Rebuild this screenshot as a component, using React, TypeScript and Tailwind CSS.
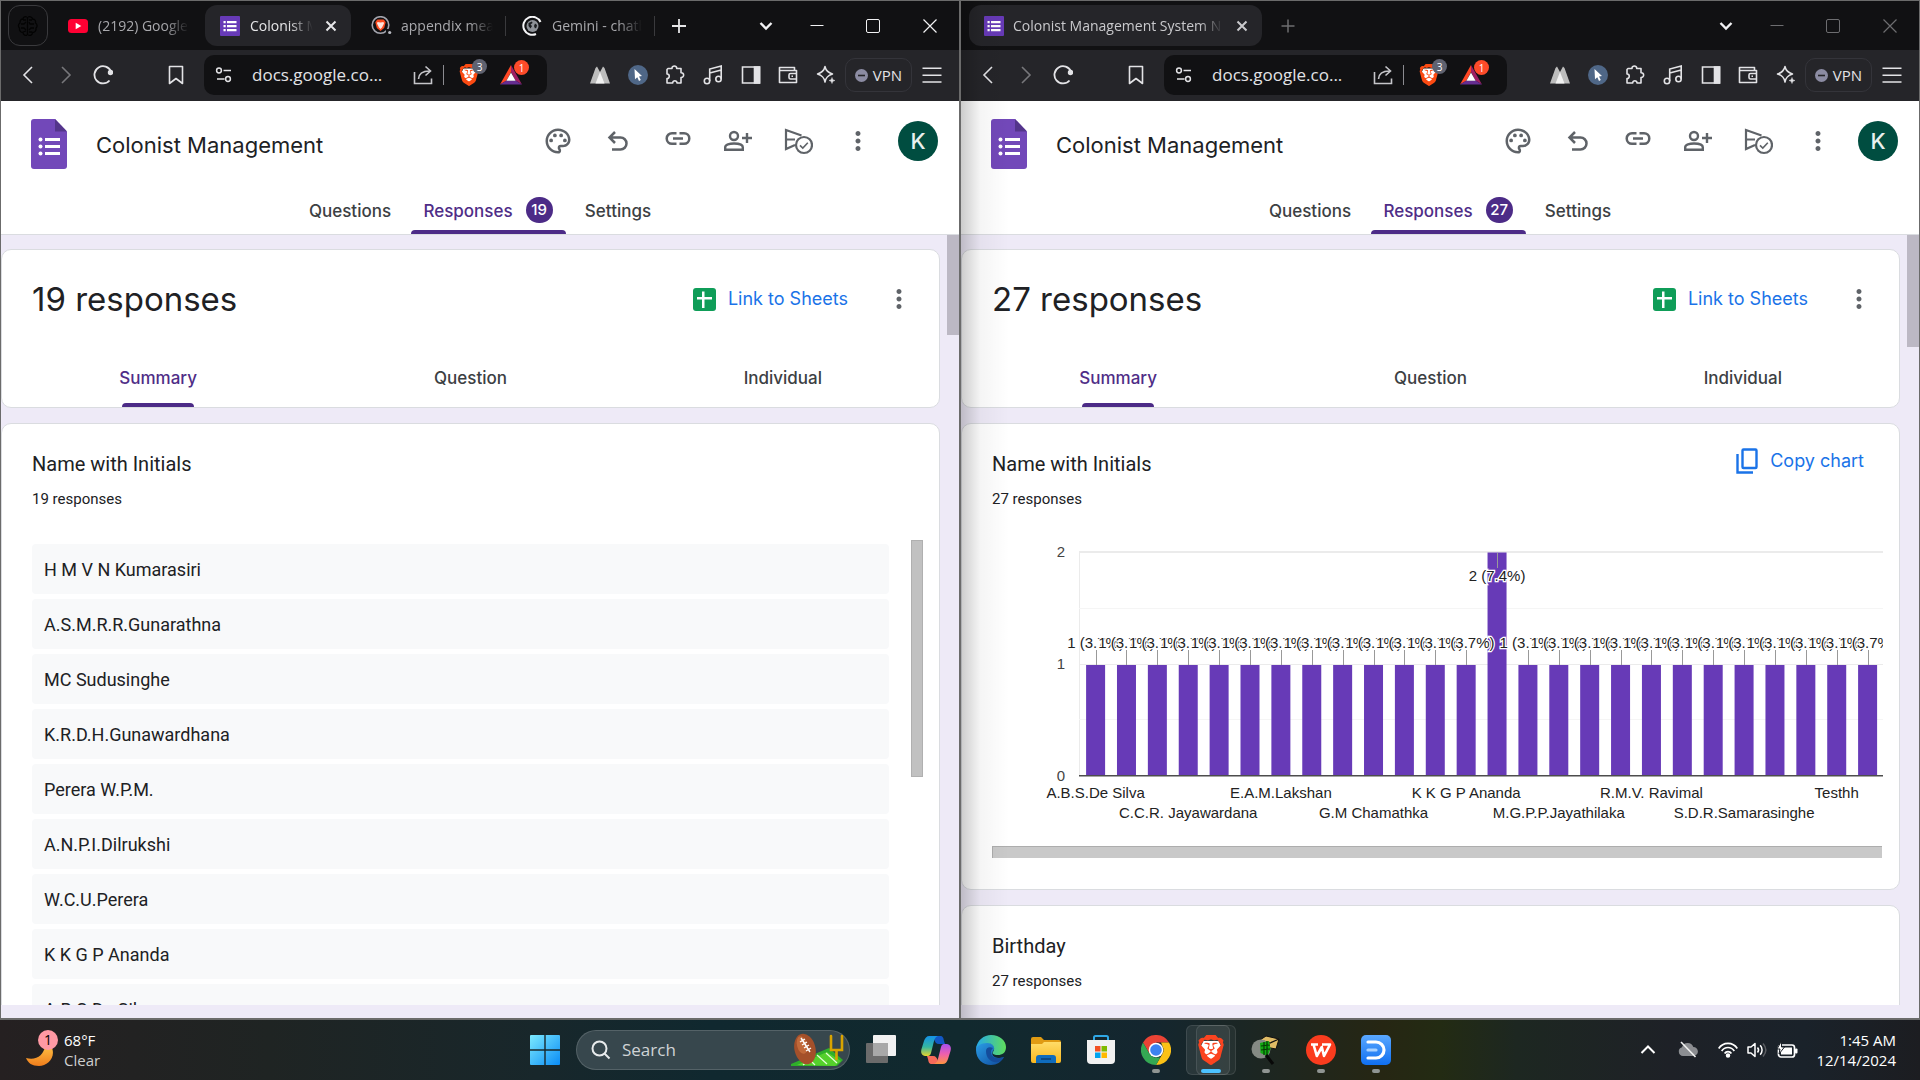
import React from "react";
import { SiBrave } from "react-icons/si";
import { MdOutlinePalette, MdMoreVert } from "react-icons/md";

const ui = "font-['Open_Sans','Noto_Sans',sans-serif]";

/* ---------- shared data ---------- */

const names = [
  "H M V N Kumarasiri",
  "A.S.M.R.R.Gunarathna",
  "MC Sudusinghe",
  "K.R.D.H.Gunawardhana",
  "Perera W.P.M.",
  "A.N.P.I.Dilrukshi",
  "W.C.U.Perera",
  "K K G P Ananda",
  "A.B.S.De Silva",
];

const axisLabels = [
  "A.B.S.De Silva",
  "C.C.R. Jayawardana",
  "E.A.M.Lakshan",
  "G.M Chamathka",
  "K K G P Ananda",
  "M.G.P.P.Jayathilaka",
  "R.M.V. Ravimal",
  "S.D.R.Samarasinghe",
  "Testhh",
];

const counts = Array.from({ length: 26 }, (_, i) => (i === 13 ? 2 : 1));

/* ---------- small icons ---------- */

function Stroke({ size = 20, w = 2, children }: { size?: number; w?: number; children: React.ReactNode }) {
  return (
    <svg width={size} height={size} viewBox="0 0 20 20" fill="none" stroke="currentColor" strokeWidth={w} aria-hidden="true">
      {children}
    </svg>
  );
}

function FormsFavicon() {
  return (
    <svg width="20" height="20" viewBox="0 0 20 20" className="shrink-0" aria-hidden="true">
      <rect width="20" height="20" rx="1" fill="#673ab7" />
      <path fill="#fff" d="M3.500 5h2.200v2.200H3.500zM7 5h9.500v2.200H7zM3.500 9h2.200v2.200H3.500zM7 9h9.500v2.200H7zM3.500 13h2.200v2.200H3.500zM7 13h9.500v2.200H7z" />
    </svg>
  );
}

function FormsLogo() {
  return (
    <svg width="36" height="50" viewBox="0 0 36 50" aria-hidden="true">
      <path fill="#7248b9" d="M3 0h21l12 12.500V47a3 3 0 0 1-3 3H3a3 3 0 0 1-3-3V3a3 3 0 0 1 3-3z" />
      <path fill="#54358b" d="M24 0l12 12.500H24z" />
      <g fill="#fff">
        <circle cx="9.500" cy="20.500" r="2" />
        <circle cx="9.500" cy="27.500" r="2" />
        <circle cx="9.500" cy="34.500" r="2" />
        <path d="M14 19h15v3H14zM14 26h15v3H14zM14 33h15v3H14z" />
      </g>
    </svg>
  );
}

function BraveMark({ size, color = "#fb542b" }: { size: number; color?: string }) {
  return (
    <span className="relative inline-flex" aria-hidden="true">
      <svg className="absolute inset-0" width={size} height={size} viewBox="0 0 20 20">
        <path fill="#fff" d="M5 4h10l1.500 3-2 6-4.500 4-4.500-4-2-6z" />
      </svg>
      <SiBrave size={size} color={color} className="relative" />
    </span>
  );
}

function AppendixFavicon() {
  return (
    <svg width="21" height="20" viewBox="0 0 21 20" className="shrink-0" aria-hidden="true">
      <circle cx="9.500" cy="9" r="8.300" fill="none" stroke="#a4a5ae" strokeWidth="1.600" />
      <path fill="#fb4a1e" d="M5 5l1.500-1.500h6L14 5l.6 1.500-1.400 5.500-3.700 3-3.700-3L4.400 6.500z" />
      <path fill="#fff" d="M6.500 6l3 .6 3-.6.5 1.400-2 4-1.500 1.600L8 11.400l-2-4z" opacity=".85" />
      <path d="M15 15.500h4" stroke="#111113" strokeWidth="5" />
      <circle cx="18.700" cy="16.500" r="1.600" fill="#b9bac2" />
    </svg>
  );
}

function GlobeFavicon() {
  return (
    <svg width="20" height="20" viewBox="0 0 20 20" className="shrink-0" aria-hidden="true">
      <path d="M18.500 6A9 9 0 1 0 14 18" fill="none" stroke="#f5f5f7" strokeWidth="2" />
      <circle cx="10.500" cy="10" r="6" fill="#8e9298" />
      <path fill="#1b1d20" d="M6.500 7l3.500-1.500.5 1.500-2 1.500 1.500 1.500-1.500 2.500-2-2.500zM13 7.500l2 1.500-.5 2.500-1.500 1-1-2.500z" />
    </svg>
  );
}

function YouTube() {
  return (
    <svg width="20" height="14" viewBox="0 0 20 14" className="shrink-0" aria-hidden="true">
      <rect width="20" height="14" rx="3.500" fill="#ff0033" />
      <path fill="#fff" d="M7.700 3.800v6.400L13.300 7z" />
    </svg>
  );
}

function BrainIcon() {
  return (
    <svg width="22" height="22" viewBox="0 0 22 22" fill="none" stroke="#030303" strokeWidth="1.300" aria-hidden="true">
      <path d="M10.500 2v18M10 2C7 1 6 3 6 4 3 4 3 7 3 8 1 9 1 12 2.500 13 2 16 4 17.500 6 17.500 6 20 9 21 10 20M4 9h3l2-2M4 13h3l2 2M6 5h3M6 17l3-1" />
      <path d="M11 2c3-1 4.500 1 4.500 2C18 4 19 6 18.500 8c2 1 2 4 .5 5 .5 3-1.500 4.500-3.500 4.500C15.500 20 13 21 11 20M17 9h-4l-1-2M17 13h-3l-2 2M15 5h-3M15 17h-3" />
    </svg>
  );
}

function RewardsIcon() {
  return (
    <svg width="22" height="20" viewBox="0 0 22 20" aria-hidden="true">
      <path fill="#ff4724" d="M11 0v7L6.500 15.500 0 19.500z" />
      <path fill="#9e1f63" d="M11 0l11 19.500-6.500-4L11 7z" />
      <path fill="#662d91" d="M0 19.500l6.500-4h9l6.500 4z" />
      <path fill="#fff" d="M11 7.500l4.600 8.300H6.400z" />
    </svg>
  );
}

/* ---------- browser chrome ---------- */

function CountBadge({ tone, children }: { tone: string; children: React.ReactNode }) {
  return (
    <span className={`absolute -top-[5px] left-[14px] flex h-[15px] w-[15px] items-center justify-center rounded-full text-[10px] leading-none text-white ${tone}`}>
      {children}
    </span>
  );
}

function WindowControls({ active }: { active: boolean }) {
  const tone = active ? "text-[#f2f2f4]" : "text-[#6d6d70]";
  return (
    <div className="mr-px ml-auto flex h-full items-center">
      <button aria-label="Search tabs" className="flex h-full w-[47px] items-center justify-center text-[#f2f2f4]">
        <Stroke size={20} w={2.4}><path d="M4.500 7l5.500 5.500L15.500 7" /></Stroke>
      </button>
      <div className={`flex h-full ${tone}`}>
        <button aria-label="Minimize" className="flex w-[56px] items-center justify-center"><Stroke w={1}><path d="M3.500 9.500h13" /></Stroke></button>
        <button aria-label="Maximize" className="flex w-[56px] items-center justify-center"><Stroke w={1}><rect x="3.500" y="3.500" width="13" height="13" rx="1.500" /></Stroke></button>
        <button aria-label="Close window" className="flex w-[57px] items-center justify-center"><Stroke w={1.2}><path d="M3.500 3.500l13 13M16.500 3.500l-13 13" /></Stroke></button>
      </div>
    </div>
  );
}

function TabTitle({ children, className }: { children: React.ReactNode; className: string }) {
  return (
    <span className={`overflow-hidden text-left text-[14px] leading-5 whitespace-nowrap [mask-image:linear-gradient(to_right,#000_calc(100%-24px),transparent)] ${ui} ${className}`}>
      {children}
    </span>
  );
}

function CloseTab() {
  return (
    <button aria-label="Close tab" className="flex h-5 w-5 items-center justify-center">
      <Stroke size={20} w={2}><path d="M5.500 5.500l9 9M14.500 5.500l-9 9" /></Stroke>
    </button>
  );
}

function TabStripLeft() {
  return (
    <div className="flex h-[49px] shrink-0 items-center bg-[#111113]">
      <button aria-label="Pinned tab" className="ml-[7px] flex h-[41px] w-10 shrink-0 items-center justify-center rounded-xl border border-[#3a3a3d]">
        <BrainIcon />
      </button>
      <button className="ml-5 flex items-center text-[#a9a9ad]">
        <YouTube />
        <TabTitle className="ml-2.5 w-[91px]">(2192) Google</TabTitle>
      </button>
      <div className="ml-4 flex h-[41px] w-[146px] shrink-0 items-center rounded-xl bg-[#252529] px-[10px] pl-[15px] text-[#e6e6e8]">
        <FormsFavicon />
        <TabTitle className="mr-auto ml-2.5 w-[63px]">Colonist M</TabTitle>
        <CloseTab />
      </div>
      <button className="ml-5 flex items-center text-[#a9a9ad]">
        <AppendixFavicon />
        <TabTitle className="ml-[9px] w-[92px]">appendix mea</TabTitle>
      </button>
      <span className="ml-3 h-5 w-px bg-[#3a3a3d]" />
      <button className="ml-4 flex items-center text-[#a9a9ad]">
        <GlobeFavicon />
        <TabTitle className="ml-2.5 w-[90px]">Gemini - chatb</TabTitle>
      </button>
      <span className="ml-3 h-5 w-px bg-[#3a3a3d]" />
      <button aria-label="New tab" className="ml-[14px] text-[#e6e6e8]"><Stroke size={20} w={1.8}><path d="M10 3v14M3 10h14" /></Stroke></button>
      <WindowControls active />
    </div>
  );
}

function TabStripRight() {
  return (
    <div className="flex h-[49px] shrink-0 items-center bg-[#111113]">
      <div className="ml-2 flex h-[41px] w-[293px] items-center rounded-xl bg-[#252529] pr-2.5 pl-[15px] text-[#c9c9cc]">
        <FormsFavicon />
        <TabTitle className="mr-auto ml-[9px] w-[210px]">Colonist Management System N</TabTitle>
        <CloseTab />
      </div>
      <button aria-label="New tab" className="ml-4 text-[#6d6d70]"><Stroke size={20} w={1.5}><path d="M10 3.500v13M3.500 10h13" /></Stroke></button>
      <WindowControls active={false} />
    </div>
  );
}

function Toolbar() {
  const id = React.useId();
  return (
    <div className={`flex h-[51px] shrink-0 items-center bg-[#252529] pb-px text-[#e3e3e6] ${ui}`}>
      <button aria-label="Back" className="ml-2 flex w-[38px] justify-center"><Stroke w={1.6}><path d="M14 2l-8 8 8 8" /></Stroke></button>
      <button aria-label="Forward" className="flex w-[38px] justify-center text-[#77777b]"><Stroke w={1.6}><path d="M6 2l8 8-8 8" /></Stroke></button>
      <button aria-label="Reload" className="flex w-[36px] justify-center">
        <Stroke w={1.8}>
          <path d="M18 6.500A8.600 8.600 0 1 0 16.500 15.500" />
          <circle cx="17.500" cy="7.500" r="1.800" fill="currentColor" />
        </Stroke>
      </button>
      <button aria-label="Bookmark this page" className="ml-9 flex w-[38px] justify-center"><Stroke w={1.6}><path d="M3.500 1.500h13v17L10 13.500l-6.500 5z" strokeLinejoin="round" /></Stroke></button>
      <div className="ml-[9px] flex h-10 w-[343px] items-center rounded-[10px] bg-[#111113]">
        <button aria-label="Site information" className="ml-2.5 flex w-5 justify-center">
          <Stroke size={20} w={1.5}><circle cx="5" cy="5.500" r="2.400" /><path d="M9.500 5.500H17M3 14h7.500" /><circle cx="14" cy="14" r="2.400" /></Stroke>
        </button>
        <label htmlFor={id} className="sr-only">Address</label>
        <input id={id} readOnly value="docs.google.co..." className="ml-[18px] w-[150px] bg-transparent text-[17px] leading-6 outline-none" />
        <button aria-label="Share" className="ml-[9px] flex w-6 justify-center text-[#c5c5c9]">
          <Stroke size={20} w={1.6}><path d="M1.500 7v11.500h17v-5M5.500 14c.3-5.500 4.500-8 11-8M12.500 1.500L17.500 6l-5 4.500" /></Stroke>
        </button>
        <span className="ml-2 h-5 w-px bg-[#8b8b90]" />
        <button aria-label="Brave Shields" className="relative ml-3.5 flex">
          <BraveMark size={22} color="#fb4a12" />
          <CountBadge tone="bg-[#5f6270]">3</CountBadge>
        </button>
        <button aria-label="Brave Rewards" className="relative ml-5 flex">
          <RewardsIcon />
          <CountBadge tone="bg-[#fd4b2a]">1</CountBadge>
        </button>
      </div>
      <div className="ml-auto grid w-[264px] grid-cols-7 justify-items-center">
        <button aria-label="Mountain extension">
          <svg width="20" height="18" viewBox="0 0 20 18" aria-hidden="true"><path fill="#bdbdbd" d="M5.500 2l1.500-1.500L10 6l3-5.500L14.500 2 20 17.500H0z" /><path fill="#f1f1f1" d="M10 6l4.500 11.500h-9z" /></svg>
        </button>
        <button aria-label="Cursor extension">
          <svg width="20" height="20" viewBox="0 0 20 20" aria-hidden="true"><circle cx="10" cy="10" r="10" fill="#4f6787" /><path fill="#fff" d="M6.500 4l7.500 7-3 .4 1.800 3.600-1.800.9-1.700-3.700-2.300 2z" /></svg>
        </button>
        <button aria-label="Extensions">
          <Stroke size={20} w={1.6}><path strokeLinejoin="round" d="M3 3.500h4c-.3-3.300 5-3.300 4.700 0H16v4.300c3.500-.3 3.500 4.900 0 4.700V18h-4c.2-3-4.500-3-4.300 0H2v-4.500c3 .2 3-4.700 0-4.500V4.500z" /></Stroke>
        </button>
        <button aria-label="Media control">
          <Stroke size={20} w={1.6}><circle cx="4" cy="16" r="2.700" /><circle cx="15.500" cy="14" r="2.700" /><path d="M6.700 16V4l11.500-3v13M6.700 8l11.500-3" /></Stroke>
        </button>
        <button aria-label="Side panel">
          <Stroke size={20} w={1.6}><path d="M1.500 2h17v16h-17z" /><path fill="currentColor" d="M13.500 2h5v16h-5z" /></Stroke>
        </button>
        <button aria-label="Wallet">
          <Stroke size={20} w={1.6}><path strokeLinejoin="round" d="M1.500 2.500h15v3h2v12h-17zM1.500 5.500h15M18.500 8.500h-6a1.500 1.500 0 0 0-1.500 1.500v2.500a1.500 1.500 0 0 0 1.500 1.500h6M13.500 11.300h1.500" /></Stroke>
        </button>
        <button aria-label="Leo AI">
          <Stroke size={20} w={1.5}><path strokeLinejoin="round" d="M9 1.500c.8 4 2.500 6 7.500 7.500C11.500 10.500 9.800 12.500 9 17c-.8-4.500-2.500-6.500-7.500-8C6.500 7.500 8.200 5.500 9 1.500z" /><path fill="currentColor" strokeWidth=".5" d="M16 12.500c.4 2 1 2.600 3 3-2 .4-2.600 1-3 3-.4-2-1-2.600-3-3 2-.4 2.600-1 3-3z" /></Stroke>
        </button>
      </div>
      <button className="flex h-[34px] w-[67px] items-center justify-center gap-[5px] rounded-[10px] border border-[#34343a] text-[15px] leading-5">
        <svg width="13" height="13" viewBox="0 0 13 13" aria-hidden="true"><circle cx="6.500" cy="6.500" r="6.500" fill="#8c8ca3" /><path d="M3 6.500h7" stroke="#252529" strokeWidth="1.600" /></svg>
        VPN
      </button>
      <button aria-label="Menu" className="mr-[17px] ml-[10px]"><Stroke size={20} w={1.5}><path d="M.5 3.300h19M.5 10.300h19M.5 17h19" /></Stroke></button>
    </div>
  );
}

/* ---------- forms page ---------- */

const gs = "font-['Inter',sans-serif]";

function FormHeader({ count }: { count: number }) {
  const cell = "flex h-10 w-[60px] items-center justify-center";
  return (
    <header className={`shrink-0 border-b border-[#dadce0] bg-white ${gs}`}>
      <div className="flex h-[84px] items-center pr-[21px] pl-[30px]">
        <a href="#forms" aria-label="Forms home" className="mt-0.5"><FormsLogo /></a>
        <h1 className="mt-1 ml-[29px] text-[22px] leading-8 text-[#202124]">Colonist Management</h1>
        <div className="-mt-1 ml-auto flex items-center text-[#5f6368]">
          <button aria-label="Customize theme" className={cell}><MdOutlinePalette size={30} /></button>
          <button aria-label="Undo" className={cell}>
            <svg width="24" height="24" viewBox="0 0 24 24" fill="none" stroke="currentColor" strokeWidth="2.500" aria-hidden="true"><path d="M9 3L3.500 8.500 9 14M4 8.500h10.500a6 6 0 0 1 0 12H6" /></svg>
          </button>
          <button aria-label="Copy responder link" className={cell}>
            <svg width="26" height="26" viewBox="0 0 26 26" fill="none" stroke="currentColor" strokeWidth="2.500" aria-hidden="true"><path d="M11.500 5.200H7a5.300 5.300 0 0 0 0 10.600h4.500M14.500 5.200H19a5.300 5.300 0 0 1 0 10.600h-4.500M8 10.500h10" /></svg>
          </button>
          <button aria-label="Share with collaborators" className={cell}>
            <svg width="28" height="24" viewBox="0 0 28 24" fill="none" stroke="currentColor" strokeWidth="2.400" aria-hidden="true"><circle cx="10" cy="7" r="4" /><path d="M1.200 20.800v-2.500c0-5 17.600-5 17.600 0v2.500zM23 4v10M18 9h10" /></svg>
          </button>
          <button aria-label="Publish" className={cell}>
            <svg width="29" height="28" viewBox="0 0 29 28" fill="none" stroke="currentColor" strokeWidth="2.200" aria-hidden="true"><path d="M17.500 8.500L2 3v19l9-4M2 12.500h9" /><circle cx="20" cy="18" r="8" /><path strokeWidth="1.600" d="M16 18.300l2.800 2.700 5-5.200" /></svg>
          </button>
          <button aria-label="More options" className={cell}><MdMoreVert size={30} /></button>
          <button aria-label="Account" className="ml-[10px] flex h-10 w-10 items-center justify-center rounded-full bg-[#004d40] text-[22px] leading-none font-medium text-[#e8f0ee]">K</button>
        </div>
      </div>
      <nav className="flex h-[49px] justify-center gap-1 text-[17px] leading-6 font-medium text-[#3c4043]">
        <button className="flex w-[113px] items-center justify-center pt-0.5">Questions</button>
        <button className="relative flex w-[155px] items-center justify-center gap-[13px] pt-0.5 text-[#4f2d87]">
          Responses
          <span className="-mt-0.5 flex h-[26px] w-[27px] items-center justify-center rounded-full bg-[#4c2b87] text-[15px] leading-none text-white">{count}</span>
          <span className="absolute inset-x-0 bottom-0 h-1 rounded-t bg-[#4c2b87]" />
        </button>
        <button className="flex w-[97px] items-center justify-center pt-0.5">Settings</button>
      </nav>
    </header>
  );
}

const card = "mr-[7px] shrink-0 rounded-[10px] border border-[#dadce0] bg-white";

function SummaryCard({ count }: { count: number }) {
  const tab = "relative flex w-full items-center justify-center";
  return (
    <section className={`${card} mt-[14px] ${gs}`}>
      <div className="flex h-[98px] items-center pr-[25px] pl-[30px]">
        <h2 className="text-[33px] leading-10 text-[#202124]">{count} responses</h2>
        <button className="ml-auto flex items-center gap-3 text-[18px] leading-6 text-[#1a73e8]">
          <svg width="23" height="23" viewBox="0 0 23 23" aria-hidden="true"><rect width="23" height="23" rx="3" fill="#0f9d58" /><path fill="#fff" d="M9 3.500h2.500v5.500h7.500v2.500h-7.500v8.500H9v-8.500H4V9h5z" /></svg>
          Link to Sheets
        </button>
        <button aria-label="Response options" className="ml-9 text-[#5f6368]"><MdMoreVert size={30} /></button>
      </div>
      <nav className="grid h-[59px] grid-cols-3 text-[17px] leading-6 font-medium text-[#3c4043]">
        <button className={`${tab} text-[#4f2d87]`}>
          Summary
          <span className="absolute bottom-0 h-1 w-[72px] rounded-t bg-[#4c2b87]" />
        </button>
        <button className={tab}>Question</button>
        <button className={tab}>Individual</button>
      </nav>
    </section>
  );
}

function QuestionHeading({ title, count, action }: { title: string; count: number; action?: React.ReactNode }) {
  return (
    <div className="flex justify-between pt-[28px] pr-[35px] pl-[30px] font-['Roboto',sans-serif] text-[#202124]">
      <div>
        <h3 className="text-[20px] leading-6">{title}</h3>
        <p className="mt-[13px] text-[15px] leading-5">{count} responses</p>
      </div>
      {action}
    </div>
  );
}

function NamesList() {
  return (
    <section className={`${card} mt-[15px]`}>
      <QuestionHeading title="Name with Initials" count={19} />
      <div className="mt-[31px] flex items-start pr-4 pl-[30px]">
        <ul className="mt-1 mr-[22px] flex flex-1 flex-col gap-[5px]">
          {names.map((n) => (
            <li key={n} className="h-[50px] rounded bg-[#f8f9fa] px-3 font-['Roboto',sans-serif] text-[18px] leading-[51px] text-[#202124]">{n}</li>
          ))}
        </ul>
        <div className="h-[237px] w-3 border border-[#b0b0b0] bg-[#c1c1c1]" />
      </div>
    </section>
  );
}

function NamesChart() {
  const cx = (i: number) => 103.6 + i * 30.88;
  return (
    <svg width="891" height="300" viewBox="0 0 891 300" role="img" aria-label="Count of responses per name" className="block font-['Liberation_Sans',Arial,sans-serif] text-[15px]">
      <g fill="#ebebeb">
        <rect x="87" y="21" width="804" height="2" />
        <rect x="87" y="134" width="804" height="1" />
        <rect x="87" y="22" width="1" height="224" />
      </g>
      <g fill="#f5f5f5">
        <rect x="87" y="78" width="804" height="1" />
        <rect x="87" y="189" width="804" height="1" />
      </g>
      {counts.map((c, i) => (
        <rect key={i} x={cx(i) - 9.5} y={c === 2 ? 22.5 : 135} width="19" height={c === 2 ? 223 : 110.5} fill="#673ab7" />
      ))}
      <rect x="87" y="245" width="804" height="1.500" fill="#4d4d4d" />
      {counts.map((c, i) => (
        <rect key={i} x={Math.round(cx(i))} y={c === 2 ? 23 : 120} width="1" height="15" fill="#999" />
      ))}
      {counts.map((c, i) => (
        <text key={i} x={cx(i)} y={c === 2 ? 51 : 118} textAnchor="middle" fill="#222" stroke="#fff" strokeWidth="2.500" paintOrder="stroke">
          {c === 2 ? "2 (7.4%)" : "1 (3.7%)"}
        </text>
      ))}
      <g fill="#444" textAnchor="end">
        <text x="73" y="27">2</text>
        <text x="73" y="139">1</text>
        <text x="73" y="251">0</text>
      </g>
      <g fill="#222" textAnchor="middle">
        {axisLabels.map((l, i) => (
          <text key={l} x={cx(i * 3)} y={i % 2 ? 288 : 268}>{l}</text>
        ))}
      </g>
    </svg>
  );
}

function ChartCards() {
  return (
    <>
      <section className={`${card} mt-[15px] pb-[31px]`}>
        <QuestionHeading
          title="Name with Initials"
          count={27}
          action={
            <button className={`-mt-[3px] flex h-6 items-center gap-3 text-[18px] leading-6 text-[#1a73e8] ${gs}`}>
              <svg width="22" height="26" viewBox="0 0 22 26" fill="none" stroke="currentColor" strokeWidth="2.400" aria-hidden="true"><rect x="6.500" y="1.500" width="14" height="18.500" rx="1" /><path d="M1.500 6v18.500H17" /></svg>
              Copy chart
            </button>
          }
        />
        <div className="mt-[21px] ml-[30px] overflow-hidden">
          <div className="mr-[15px] overflow-hidden"><NamesChart /></div>
          <div className="mt-4 mr-[17px] h-3 border-t border-l border-[#adadad] bg-[#c9c9c9]" />
        </div>
      </section>
      <section className={`${card} mt-[15px] pb-40`}>
        <QuestionHeading title="Birthday" count={27} />
      </section>
    </>
  );
}

function BrowserWindow({ tabs, count, thumb, children, shaded }: { tabs: React.ReactNode; count: number; thumb: string; children: React.ReactNode; shaded?: boolean }) {
  return (
    <section className="relative flex min-h-0 min-w-0 flex-col border-x border-t border-b-2 border-[#6b6b6b] bg-[#eeeaf7]">
      {tabs}
      <Toolbar />
      <FormHeader count={count} />
      <div className="mb-[13px] flex min-h-0 flex-1">
        <div className="flex min-w-0 flex-1 flex-col overflow-hidden">
          <SummaryCard count={count} />
          {children}
        </div>
        <div className="w-3"><div className={`bg-[#bcb8c4] ${thumb}`} /></div>
      </div>
      {shaded && <div className="pointer-events-none absolute inset-y-0 left-0 w-12 bg-linear-to-r from-black/20 via-black/4 via-40% to-transparent" />}
    </section>
  );
}

/* ---------- taskbar ---------- */

function Football() {
  return (
    <svg width="56" height="36" viewBox="0 0 56 36" aria-hidden="true">
      <path d="M2 32L40 16l14 12-6 6H2z" fill="#2fae2a" />
      <path d="M8 33l30-13 14 9-6 5z" fill="#55d02c" />
      <path d="M14 33l6-5M26 33l-7-7M38 32l-10-9M48 31l-11-10" stroke="#e6ffd9" strokeWidth="1.200" />
      <ellipse cx="16" cy="17" rx="10.500" ry="15.500" fill="#a4502a" transform="rotate(-14 16 17)" />
      <ellipse cx="13" cy="13" rx="5" ry="9" fill="#c1693a" transform="rotate(-14 13 13)" />
      <path d="M12 6l9 14M11 10l5-3M13 13l5-3M15 16l5-3M17 19l5-3" stroke="#fff" strokeWidth="1.400" />
      <path d="M42 4v14h11V4M47.500 18v9" fill="none" stroke="#d9a400" strokeWidth="2.600" strokeLinecap="round" />
    </svg>
  );
}

function AppButton({ label, mark, children }: { label: string; mark?: "open" | "active"; children: React.ReactNode }) {
  return (
    <button aria-label={label} className="relative flex h-[60px] w-[55px] items-center justify-center">
      {mark === "active" && (
        <>
          <span className="absolute top-[5px] right-0.5 h-[50px] w-10 rounded-md border border-white/10 bg-white/5" />
          <span className="absolute top-[5px] left-[3px] h-[50px] w-11 rounded-md border border-white/10 bg-white/8" />
        </>
      )}
      <span className="relative flex">{children}</span>
      {mark === "open" && <span className="absolute bottom-[7px] h-1 w-2 rounded-full bg-[#8f9492]" />}
      {mark === "active" && <span className="absolute bottom-[7px] h-1 w-5 rounded-full bg-[#4cc2ff]" />}
    </button>
  );
}

function Taskbar() {
  const defs = (
    <defs>
      <linearGradient id="win" x1="0" y1="0" x2="1" y2="1"><stop offset="0" stopColor="#7ceaff" /><stop offset="1" stopColor="#0a8cf5" /></linearGradient>
      <linearGradient id="cp1" x1="0" y1="0" x2="0" y2="1"><stop offset="0" stopColor="#1492e8" /><stop offset=".55" stopColor="#35b6a0" /><stop offset="1" stopColor="#e8d62c" /></linearGradient>
      <linearGradient id="cp2" x1="0" y1="0" x2="0" y2="1"><stop offset="0" stopColor="#a64ff0" /><stop offset=".5" stopColor="#ee5fae" /><stop offset="1" stopColor="#ff9440" /></linearGradient>
      <linearGradient id="ed1" x1="0" y1="0" x2="1" y2="0"><stop offset="0" stopColor="#24a7ea" /><stop offset="1" stopColor="#5fdd5c" /></linearGradient>
      <linearGradient id="ed2" x1="0" y1="0" x2="1" y2="1"><stop offset="0" stopColor="#2b9fe8" /><stop offset="1" stopColor="#0f4a9c" /></linearGradient>
      <linearGradient id="dk" x1="0" y1="0" x2="0" y2="1"><stop offset="0" stopColor="#5aa8ff" /><stop offset="1" stopColor="#0f6ff0" /></linearGradient>
      <linearGradient id="fold" x1="0" y1="0" x2="0" y2="1"><stop offset="0" stopColor="#ffdc68" /><stop offset="1" stopColor="#f8b71e" /></linearGradient>
      <linearGradient id="moon" x1="0" y1="0" x2="0" y2="1"><stop offset="0" stopColor="#ffc043" /><stop offset="1" stopColor="#ef7d1c" /></linearGradient>
    </defs>
  );
  return (
    <footer className={`grid h-[60px] shrink-0 grid-cols-[1fr_auto_1fr] items-center bg-[linear-gradient(to_right,#252021_0%,#1f2423_14%,#18272b_28%,#10282f_37%,#11292e_50%,#14262f_60%,#262613_72%,#232b13_75%,#1d2721_79%,#1e2127_87%,#1a222a_94%,#1c1d21_100%)] text-white ${ui}`}>
      <svg width="0" height="0" className="absolute" aria-hidden="true">{defs}</svg>
      <button className="ml-[26px] flex w-fit items-center pb-px text-left">
        <span className="relative block h-9 w-8">
          <svg width="29" height="36" viewBox="0 0 29 36" aria-hidden="true"><path fill="url(#moon)" d="M25 14c6 10-3 20-12 20C6 34 2 31 0 26c10 3 18-3 19-12z" /></svg>
          <span className="absolute -top-0.5 left-3 flex h-5 w-5 items-center justify-center rounded-full bg-[#ff99a4] text-[14px] leading-none text-black">1</span>
        </span>
        <span className="ml-1.5 text-[15px] leading-5">68°F<br /><span className="text-[#cfcfcf]">Clear</span></span>
      </button>
      <div className="flex items-center">
        <AppButton label="Start">
          <svg width="30" height="30" viewBox="0 0 30 30" aria-hidden="true"><path fill="url(#win)" d="M1 0h13.300v14.300H0V1a1 1 0 0 1 1-1zM15.700 0H29a1 1 0 0 1 1 1v13.300H15.700zM0 15.700h14.300V30H1a1 1 0 0 1-1-1zM15.700 15.700H30V29a1 1 0 0 1-1 1H15.700z" /></svg>
        </AppButton>
        <div className="mr-[3px] ml-1 flex h-10 w-[274px] items-center rounded-full border border-white/15 bg-[#37474d] pr-1 pl-3.5">
          <svg width="20" height="20" viewBox="0 0 20 20" fill="none" stroke="#e8ebec" strokeWidth="2" aria-hidden="true"><circle cx="8.500" cy="8.500" r="7" /><path d="M13.500 13.500l5 5" /></svg>
          <label htmlFor="task-search" className="sr-only">Search</label>
          <input id="task-search" placeholder="Search" className="ml-[11px] min-w-0 flex-1 bg-transparent text-[17px] leading-6 outline-none placeholder:text-[#cfd3d5]" />
          <Football />
        </div>
        <AppButton label="Task view">
          <svg width="30" height="30" viewBox="0 0 30 30" aria-hidden="true"><rect y="8" width="22" height="20" rx="1" fill="#6b6b6b" /><rect x="7" width="23" height="21" rx="1" fill="#f1f1f1" /><rect x="7" y="8" width="15" height="13" fill="#a8a8a8" /></svg>
        </AppButton>
        <AppButton label="Copilot">
          <svg width="30" height="28" viewBox="0 0 30 28" aria-hidden="true">
            <path fill="#1257c4" d="M9 0h10c3 0 3.500 2 4 5l1 3h-6c-3 0-4-2-5-5z" />
            <path fill="url(#cp1)" d="M8.500 0H17c-3 1-3.500 3-5 9l-2 8c-.6 2.500-2 3-4.500 3-5 0-6-3-5-7L3 5c1-3 2.500-5 5.500-5z" />
            <path fill="#f76a5a" d="M21 28H11c-3 0-3.500-2-4-5l-1-3h6c3 0 4 2 5 5z" />
            <path fill="url(#cp2)" d="M21.500 28H13c3-1 3.500-3 5-9l2-8c.6-2.500 2-3 4.500-3 5 0 6 3 5 7l-2.500 8c-1 3-2.500 5-5.500 5z" />
          </svg>
        </AppButton>
        <AppButton label="Edge">
          <svg width="30" height="30" viewBox="0 0 30 30" aria-hidden="true">
            <path fill="url(#ed2)" d="M0 15C0 7 7 5 14 8c5 2 5 6 3 8-2 3 0 7 6 7 2 0 4-1 5-1-3 5-7 8-13 8C7 30 0 24 0 15z" />
            <path fill="#144c9b" d="M10 16c0 8 6 12 12 11 3-.5 5-3 6-5-4 2-13 2-13-5 0-2 1-3 2-4-4-2-7 0-7 3z" />
            <path fill="url(#ed1)" d="M0 14C1 5 8 0 15 0c9 0 15 6 15 12s-4 8-8 8c-5 0-6-2-5-3 3-4 0-9-6-9C5 8 1 11 0 14z" />
          </svg>
        </AppButton>
        <AppButton label="File Explorer">
          <svg width="30" height="26" viewBox="0 0 30 26" aria-hidden="true"><path fill="#e09b13" d="M0 2a2 2 0 0 1 2-2h8l3 3h15a2 2 0 0 1 2 2v5H0z" /><path fill="url(#fold)" d="M0 7l11 0 2-2h17v19a2 2 0 0 1-2 2H2a2 2 0 0 1-2-2z" /><path fill="#0f6cbd" d="M5 26v-5a3 3 0 0 1 3-3h14a3 3 0 0 1 3 3v5z" /><path d="M10 22h10" stroke="#0b4a86" strokeWidth="2" /></svg>
        </AppButton>
        <AppButton label="Microsoft Store">
          <svg width="30" height="30" viewBox="0 0 30 30" aria-hidden="true"><path d="M8 6V2.500A1.500 1.500 0 0 1 9.500 1h11A1.500 1.500 0 0 1 22 2.500V6" fill="none" stroke="#2fa8e6" strokeWidth="2" /><path fill="#f1f1f1" d="M1 5h28v20a4 4 0 0 1-4 4H5a4 4 0 0 1-4-4z" /><path fill="#f25022" d="M9 11h5.500v5.500H9z" /><path fill="#7fba00" d="M15.500 11H21v5.500h-5.500z" /><path fill="#00a4ef" d="M9 17.500h5.500V23H9z" /><path fill="#ffb900" d="M15.500 17.500H21V23h-5.500z" /></svg>
        </AppButton>
        <AppButton label="Chrome" mark="open">
          <svg width="30" height="30" viewBox="0 0 30 30" aria-hidden="true"><path fill="#ea4335" d="M2 7.500a15 15 0 0 1 26 0H15L8.500 18.800z" /><path fill="#fbc116" d="M28 7.500A15 15 0 0 1 15 30l6.500-11.300a7.500 7.500 0 0 0 0-7.500L20 7.500z" /><path fill="#34a853" d="M15 30A15 15 0 0 1 2 7.500l6.500 11.300A7.500 7.500 0 0 0 15 22.500h4.300z" /><circle cx="15" cy="15" r="7.300" fill="#fff" /><circle cx="15" cy="15" r="5.800" fill="#3c82f0" /></svg>
        </AppButton>
        <AppButton label="Brave" mark="active"><BraveMark size={30} color="#fb4420" /></AppButton>
        <AppButton label="Mail inspector" mark="open">
          <svg width="30" height="30" viewBox="0 0 30 30" aria-hidden="true"><path fill="#e0bc66" stroke="#111" d="M9 5l6-4 13 3-3 10-16-3z" /><path d="M9 5l10 3 9-4" fill="none" stroke="#111" strokeWidth="1.200" /><circle cx="10" cy="14" r="9.500" fill="#858a84" /><path fill="#1a1" d="M9 8l9-2 1.500 8-3 7-7-3z" /><path d="M10 11l9-1M10 15l9-1M13 7v13M16 6v14" stroke="#063a06" strokeWidth="1.200" /><path d="M15 20l7 9" stroke="#080808" strokeWidth="3" /></svg>
        </AppButton>
        <AppButton label="WPS Office" mark="open">
          <svg width="30" height="30" viewBox="0 0 30 30" aria-hidden="true"><circle cx="15" cy="15" r="15" fill="#fa3c1e" /><path d="M5 9.500h7M7.500 9.500l3.300 11.500 5-9 2.200 9L24 9.500h-8" fill="none" stroke="#fff" strokeWidth="2.600" strokeLinejoin="round" /></svg>
        </AppButton>
        <AppButton label="Drawing app" mark="open">
          <svg width="30" height="30" viewBox="0 0 30 30" aria-hidden="true"><rect width="30" height="30" rx="5" fill="url(#dk)" /><path d="M7 7h8a8 8 0 0 1 0 16H7" fill="none" stroke="#fff" strokeWidth="3.200" strokeLinecap="round" /><path d="M7 15h8" stroke="#a9d2ff" strokeWidth="3.200" strokeLinecap="round" /></svg>
        </AppButton>
      </div>
      <div className="flex items-center justify-end pr-6">
        <button aria-label="Show hidden icons" className="flex w-10 justify-center"><Stroke size={20} w={2}><path d="M3.500 13l6.500-6.500 6.500 6.500" /></Stroke></button>
        <button aria-label="OneDrive" className="flex w-10 justify-center">
          <svg width="20" height="18" viewBox="0 0 20 18" aria-hidden="true"><path fill="#8b8d91" d="M5 15a4.500 4.500 0 0 1-1-8.800A6 6 0 0 1 15.300 6 4.500 4.500 0 0 1 15.500 15z" /><path d="M3 1l14.500 15" stroke="#f2f2f2" strokeWidth="1.600" /></svg>
        </button>
        <button aria-label="Network, volume and battery" className="ml-[10px] flex items-center gap-[9px]">
          <svg width="20" height="16" viewBox="0 0 20 16" fill="none" stroke="#fff" strokeWidth="1.700" aria-hidden="true"><path d="M.7 6.500C5-.4 15-.4 19.300 6.500M3.700 9c3-4.700 9.600-4.700 12.600 0M6.600 11.500c1.700-2.600 5.100-2.600 6.800 0" /><circle cx="10" cy="13.500" r="1.400" fill="#fff" /></svg>
          <svg width="21" height="16" viewBox="0 0 21 16" fill="none" stroke="#fff" strokeWidth="1.500" aria-hidden="true"><path strokeLinejoin="round" d="M1 5h3l4-3.500v13L4 11H1z" /><path d="M10.500 5.500c1.300 1.500 1.300 3.500 0 5M13.200 3.300c2.500 2.700 2.500 6.700 0 9.400" /><path stroke="#5a5c61" d="M16 1.500c3.500 4 3.500 9 0 13" /></svg>
          <svg width="21" height="18" viewBox="0 0 21 18" aria-hidden="true"><rect x="1.500" y="4" width="16" height="12" rx="2.500" fill="none" stroke="#fff" strokeWidth="1.700" /><rect x="4" y="6.500" width="11" height="7" fill="#fff" /><path fill="#fff" stroke="#1b2027" strokeWidth="1" d="M4.500 0L0 8h3l-1 5 5.500-7H4.500z" /><rect x="18" y="7.500" width="2.500" height="5" rx="1" fill="#fff" /></svg>
        </button>
        <button className="ml-[18px] pb-px text-right text-[15px] leading-5">1:45 AM<br />12/14/2024</button>
      </div>
    </footer>
  );
}

export default function App() {
  return (
    <div className="flex h-screen flex-col overflow-hidden bg-[#111113]">
      <main className="grid min-h-0 flex-1 grid-cols-2 grid-rows-1">
        <BrowserWindow tabs={<TabStripLeft />} count={19} thumb="h-[100px]">
          <NamesList />
        </BrowserWindow>
        <BrowserWindow tabs={<TabStripRight />} count={27} thumb="h-[112px]" shaded>
          <ChartCards />
        </BrowserWindow>
      </main>
      <Taskbar />
    </div>
  );
}
